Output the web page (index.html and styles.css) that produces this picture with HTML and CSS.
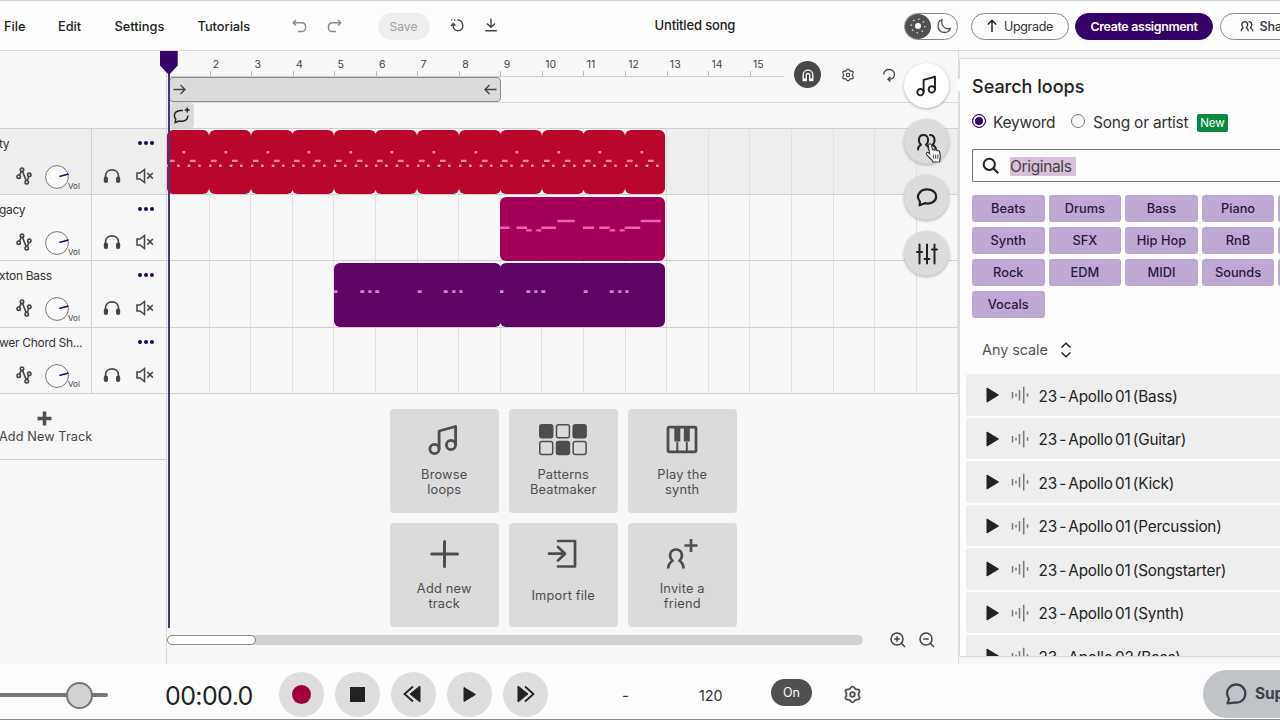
FILE: index.html
```html
<!DOCTYPE html>
<html lang="en">

<head>
  <meta charset="UTF-8">
  <meta name="viewport" content="width=device-width, initial-scale=1.0">
  <title>Untitled song</title>
  <link rel="stylesheet" href="styles.css">
</head>

<body>
  <!-- shared icons -->
  <svg class="defs" width="0" height="0">
    <symbol id="note" viewBox="0 0 32 32"><g fill="none" stroke="currentColor" stroke-width="2.8" stroke-linejoin="round"><circle cx="6.500" cy="25" r="4.6"/><circle cx="23" cy="21" r="4.6"/><path d="M11.1 25V7L27.6 2.500V21"/></g></symbol>
    <symbol id="people" viewBox="0 0 22 18"><g fill="none" stroke="currentColor" stroke-width="2" stroke-linecap="round" stroke-linejoin="round"><path d="M2 16.500C2 14.500 3 13 5 11.700C1.500 8.500 2.500 2 7.500 2S13.500 8.500 10 11.700C12 13 13 14.500 13 16.500M14 2C19 2 20 8.500 16.500 11.700C18.500 13 20 14.500 20 16.500"/></g></symbol>
    <symbol id="gear" viewBox="0 0 24 24"><g fill="none" stroke="currentColor" stroke-width="2.300" stroke-linejoin="round"><path d="M12 2C14 2 14.500 4.700 16 5.300C17.500 6 19.500 4.600 20.700 6.700C21.800 8.900 19.500 10 19.500 12S21.800 15.100 20.700 17.300C19.500 19.400 17.500 18 16 18.700C14.500 19.300 14 22 12 22S9.500 19.300 8 18.700C6.500 18 4.500 19.400 3.300 17.300C2.200 15.100 4.500 14 4.500 12S2.200 8.900 3.300 6.700C4.500 4.600 6.500 6 8 5.300C9.500 4.700 10 2 12 2Z"/><circle cx="12" cy="12" r="2.900"/></g></symbol>
    <symbol id="automation" viewBox="0 0 16 18"><g fill="none" stroke="currentColor" stroke-width="1.600"><circle cx="2.700" cy="9.700" r="1.700"/><circle cx="6" cy="2.700" r="1.700"/><circle cx="10.700" cy="15.200" r="1.700"/><circle cx="13.300" cy="7.800" r="1.700"/><path d="M3.400 8.100L5.300 4.300M6.500 4.400L10.100 13.500M11.300 13.600L12.700 9.500"/></g></symbol>
    <symbol id="headphones" viewBox="0 0 18 16"><path d="M2.500 11V8C2.500-.3 15.500-.3 15.500 8V11" fill="none" stroke="currentColor" stroke-width="1.700"/><rect x=".8" y="8.500" width="4.200" height="6.500" rx="2" fill="currentColor"/><rect x="13" y="8.500" width="4.200" height="6.500" rx="2" fill="currentColor"/></symbol>
    <symbol id="mute" viewBox="0 0 18 16"><g fill="none" stroke="currentColor" stroke-width="1.500"><path d="M1 5H4L8.500 1.500V14.500L4 11H1ZM11.300 5L16.800 10.600M16.800 5L11.300 10.600"/></g></symbol>
    <symbol id="knob" viewBox="0 0 24 24"><circle cx="12" cy="12" r="11.400" fill="#fbfbfb" stroke="#777"/><path d="M14.300 11.500L23.500 9" stroke="#35006b" stroke-width="1.600"/></symbol>
    <symbol id="wave" viewBox="0 0 18 18"><path d="M1.500 6V12.500M5 7.700V10.500M8.500 4V14.500M12.700 .8V17.500M16.500 7.200V10.800" stroke="#777" stroke-width="1.500"/></symbol>
    <symbol id="play" viewBox="0 0 14 16"><path d="M1 1L12.500 8L1 15Z" fill="currentColor" stroke="currentColor" stroke-linejoin="round"/></symbol>
    <symbol id="beat" viewBox="0 0 42 64"><path d="M0 34.500h2.500v2.500H0zM2 29.700h5.600v2.400H2zM10 34.500h2.700v2.500H10zM15.500 21h2.700v2.600h-2.700zM20.700 34.500h2.700v2.500h-2.700zM23 29.700h5.600v2.400H23zM31 34.500h2.700v2.500H31z" fill="#f48a9f"/></symbol>
    <symbol id="bassline" viewBox="0 0 166 64"><path d="M0 27.300h3.500v2.600H0zM26.300 27.300h4v2.600h-4zM34.300 27.300h3.200v2.600h-3.200zM41.300 27.300h4v2.600h-4zM83.700 27.300h4v2.600h-4zM109.700 27.300h4v2.600h-4zM118.300 27.300h3.200v2.600h-3.200zM125.300 27.300h3.200v2.600h-3.200z" fill="#cb86d6"/></symbol>
    <symbol id="comment" viewBox="0 0 24 22"><path d="M4.300 15.500C-1 9 4.500 2.200 12.300 2.200C18 2.200 22 5.500 22 9.800C22 15.500 16 18.700 9.700 17.200L4 19.500Z" fill="none" stroke="currentColor" stroke-width="2.400" stroke-linejoin="round"/></symbol>
  </svg>

  <div class="app">
    <header class="topbar">
      <nav class="menu">
        <a class="menu-file">File</a>
        <a class="menu-edit">Edit</a>
        <a class="menu-settings">Settings</a>
        <a class="menu-tutorials">Tutorials</a>
      </nav>
      <div class="history">
        <svg width="15" height="14" viewBox="0 0 15 14"><path d="M4 1L1.200 3.800L4 6.500M1.500 3.800H9.500C15 3.800 15 12.500 9.500 12.500H6" /></svg>
        <svg width="15" height="14" viewBox="0 0 15 14"><path d="M11 1L13.800 3.800L11 6.500M13.500 3.800H5.500C0 3.800 0 12.500 5.500 12.500H9" /></svg>
      </div>
      <button type="button" class="save">Save</button>
      <div class="file-icons">
        <svg width="14" height="14" viewBox="0 0 14 14"><path d="M7.500 2C14.500 2 14.500 12.800 8 12.800C4.500 12.800 2.700 10 3.200 6.500M1 8L3.200 5.500L5.500 7.500M1 2H2.300M4 2H5.300" /></svg>
        <svg width="14" height="14" viewBox="0 0 14 14"><path d="M7 .5V9M3 5.500L7 9.300L11 5.500M1.200 12.800H12.800" /></svg>
      </div>
      <h1 class="song-title">Untitled song</h1>
      <div class="theme">
        <span class="theme-sun"><svg width="18" height="18" viewBox="0 0 18 18"><circle cx="9" cy="9" r="3" fill="#fff"/><circle cx="9" cy="9" r="6.800" fill="none" stroke="#ddd" stroke-width="1.400" stroke-dasharray="1.400 3.940"/></svg></span>
        <span class="theme-moon"><svg width="16" height="16" viewBox="0 0 16 16"><path d="M6 1.500C0 4 .8 14.500 8.500 14.500C11.500 14.500 13.700 12.700 14.500 10.400C8.500 12 4.500 7 6 1.500Z" fill="none" stroke="#505050" stroke-width="1.300" stroke-linejoin="round"/></svg></span>
      </div>
      <button type="button" class="pill upgrade"><svg width="12" height="14" viewBox="0 0 12 14"><path d="M6 13V1.500M1.800 5.500L6 1.300L10.200 5.500" fill="none" stroke="#222" stroke-width="1.500"/></svg>Upgrade</button>
      <button type="button" class="pill create">Create assignment</button>
      <button type="button" class="pill share"><svg width="14" height="12"><use href="#people"/></svg>Share</button>
    </header>

    <main class="workspace">
      <section class="tracks">
        <div class="track selected">
          <div class="track-main">
            <p class="track-name">ty</p>
            <div class="controls"><svg width="16" height="18"><use href="#automation"/></svg><svg class="knob" width="24" height="24"><use href="#knob"/></svg><span class="vol">Vol</span></div>
          </div>
          <div class="track-side">
            <span class="dots"><i></i><i></i><i></i></span>
            <div class="side-icons"><svg width="18" height="16"><use href="#headphones"/></svg><svg width="18" height="16"><use href="#mute"/></svg></div>
          </div>
        </div>
        <div class="track">
          <div class="track-main">
            <p class="track-name">gacy</p>
            <div class="controls"><svg width="16" height="18"><use href="#automation"/></svg><svg class="knob" width="24" height="24"><use href="#knob"/></svg><span class="vol">Vol</span></div>
          </div>
          <div class="track-side">
            <span class="dots"><i></i><i></i><i></i></span>
            <div class="side-icons"><svg width="18" height="16"><use href="#headphones"/></svg><svg width="18" height="16"><use href="#mute"/></svg></div>
          </div>
        </div>
        <div class="track">
          <div class="track-main">
            <p class="track-name">xton Bass</p>
            <div class="controls"><svg width="16" height="18"><use href="#automation"/></svg><svg class="knob" width="24" height="24"><use href="#knob"/></svg><span class="vol">Vol</span></div>
          </div>
          <div class="track-side">
            <span class="dots"><i></i><i></i><i></i></span>
            <div class="side-icons"><svg width="18" height="16"><use href="#headphones"/></svg><svg width="18" height="16"><use href="#mute"/></svg></div>
          </div>
        </div>
        <div class="track">
          <div class="track-main">
            <p class="track-name">wer Chord Sh...</p>
            <div class="controls"><svg width="16" height="18"><use href="#automation"/></svg><svg class="knob" width="24" height="24"><use href="#knob"/></svg><span class="vol">Vol</span></div>
          </div>
          <div class="track-side">
            <span class="dots"><i></i><i></i><i></i></span>
            <div class="side-icons"><svg width="18" height="16"><use href="#headphones"/></svg><svg width="18" height="16"><use href="#mute"/></svg></div>
          </div>
        </div>
        <div class="add-track">
          <svg width="15" height="15" viewBox="0 0 15 15"><path d="M7.500 .5V14.500M.5 7.500H14.500" stroke="#505050" stroke-width="3.600"/></svg>
          <span>Add New Track</span>
        </div>
      </section>

      <section class="timeline">
        <div class="ruler-row">
          <div class="ruler">
            <span></span><span>2</span><span>3</span><span>4</span><span>5</span><span>6</span><span>7</span><span>8</span><span>9</span><span>10</span><span>11</span><span>12</span><span>13</span><span>14</span><span>15</span>
          </div>
          <div class="ruler-tools">
            <span class="magnet"><svg width="14" height="14" viewBox="0 0 14 14"><path d="M2.200 12.500V7C2.200 .6 11.800 .6 11.800 7V12.500H8.800V7.500C8.800 4.800 5.200 4.800 5.200 7.500V12.500Z" fill="none" stroke="#fff" stroke-width="1.300"/><path d="M2 10.500h3.400v2H2zM8.600 10.500H12v2H8.600z" fill="#fff"/></svg></span>
            <svg class="grid-gear" width="14" height="14"><use href="#gear"/></svg>
            <svg class="grid-loop" width="14" height="14" viewBox="0 0 14 14"><path d="M1.700 6.500C1.700-.5 12.500 .2 12.500 6.500C12.500 10 9.500 11.500 6.500 11.200M8.500 8.800L6 11.200L8.500 13.500" fill="none" stroke="#444" stroke-width="1.300"/></svg>
          </div>
        </div>
        <div class="loop-row">
          <div class="loop-range">
            <svg width="13" height="11" viewBox="0 0 13 11"><path d="M.5 5.500H12M7.500 1L12 5.500L7.500 10"/></svg>
            <svg width="13" height="11" viewBox="0 0 13 11"><path d="M12.500 5.500H1M5.500 1L1 5.500L5.500 10"/></svg>
          </div>
        </div>
        <div class="marker-row">
          <span class="marker-add"><svg width="18" height="17" viewBox="0 0 18 17"><path d="M10 3.500H8C3 3.500 .8 6.500 1.500 9.500C1.800 11 2.700 12 2.700 12L2.200 15.500L6 14C12 15 15 12.500 14.800 8.500M14.200 .5V5.500M11.700 3H16.700" fill="none" stroke="#222" stroke-width="1.500"/></svg></span>
        </div>

        <div class="lanes">
          <div class="lane selected">
            <svg class="clip red"><use href="#beat" width="42" height="64"/></svg><svg class="clip red"><use href="#beat" width="42" height="64"/></svg><svg class="clip red"><use href="#beat" width="42" height="64"/></svg><svg class="clip red"><use href="#beat" width="42" height="64"/></svg><svg class="clip red"><use href="#beat" width="42" height="64"/></svg><svg class="clip red"><use href="#beat" width="42" height="64"/></svg><svg class="clip red"><use href="#beat" width="42" height="64"/></svg><svg class="clip red"><use href="#beat" width="42" height="64"/></svg><svg class="clip red"><use href="#beat" width="42" height="64"/></svg><svg class="clip red"><use href="#beat" width="42" height="64"/></svg><svg class="clip red"><use href="#beat" width="42" height="64"/></svg><svg class="clip red"><use href="#beat" width="42" height="64"/></svg>
          </div>
          <div class="lane from-nine">
            <svg class="clip magenta"><path d="M0 29.500h9.500v2.400H0zM16.500 29.500H27v2.400H16.500zM26.300 32.200h5.500v2.400h-5.500zM36.300 32.200h5v2.400h-5zM41.300 29.500H56v2.400H41.300zM57.500 22.800h17.300v2.400H57.500zM83 29.500h11v2.400H83zM99.300 29.500h10.400v2.400H99.300zM109.700 32.200h5.500v2.400h-5.500zM119.700 32.200h5v2.400h-5zM124.700 29.500h15.500v2.400h-15.500zM140.700 22.800h20v2.400h-20z" fill="#ee62b4"/></svg>
          </div>
          <div class="lane from-five">
            <svg class="clip purple"><use href="#bassline" width="166" height="64"/></svg><svg class="clip purple"><use href="#bassline" width="166" height="64"/></svg>
          </div>
          <div class="lane"></div>
        </div>

        <div class="cards">
          <div class="card"><svg width="32" height="32"><use href="#note"/></svg><p>Browse<br>loops</p></div>
          <div class="card"><svg width="48" height="32" viewBox="0 0 48 32"><g fill="none" stroke="#4d4d4d" stroke-width="1.500"><rect x=".8" y=".8" width="12.900" height="12.900" rx="2" fill="#4d4d4d"/><rect x="17.500" y=".8" width="12.900" height="12.900" rx="2"/><rect x="34.200" y=".8" width="12.900" height="12.900" rx="2" fill="#4d4d4d"/><rect x=".8" y="17.500" width="12.900" height="12.900" rx="2"/><rect x="17.500" y="17.500" width="12.900" height="12.900" rx="2" fill="#4d4d4d"/><rect x="34.200" y="17.500" width="12.900" height="12.900" rx="2"/></g></svg><p>Patterns<br>Beatmaker</p></div>
          <div class="card"><svg width="32" height="32" viewBox="0 0 32 32"><rect x="2" y="3.200" width="28" height="24.600" fill="none" stroke="#4d4d4d" stroke-width="2.800" rx="1"/><path d="M11.300 18V27M20.800 18V27" stroke="#4d4d4d" stroke-width="2"/><path d="M8.300 3H14.300V17.500H8.300ZM17.800 3H23.800V17.500H17.800Z" fill="#4d4d4d"/></svg><p>Play the<br>synth</p></div>
          <div class="card"><svg width="32" height="32" viewBox="0 0 32 32"><path d="M16.500 3.500V28.500M3.700 16H29.500" stroke="#4d4d4d" stroke-width="3" stroke-linecap="round"/></svg><p>Add new<br>track</p></div>
          <div class="card"><svg width="32" height="32" viewBox="0 0 32 32"><path d="M11 3H28V28.500H11M2 15.700H17M11 9L18 15.700L11 22.500" fill="none" stroke="#4d4d4d" stroke-width="2.700" stroke-linecap="round" stroke-linejoin="round"/></svg><p class="single">Import file</p></div>
          <div class="card"><svg width="32" height="32" viewBox="0 0 32 32"><path d="M2.200 30.500C2.200 26.500 4 24.500 6.300 22.700C2 17.500 4.500 11.500 10 11.500S18 17.500 13.700 22.700C16 24.500 17.500 26.500 17.500 30.500" fill="none" stroke="#4d4d4d" stroke-width="2.700"/><path d="M25 1V14M18.500 7.500H31.500" stroke="#4d4d4d" stroke-width="2.700"/></svg><p>Invite a<br>friend</p></div>
        </div>

        <div class="scroll-row">
          <div class="scrollbar"><div class="thumb"></div></div>
          <svg width="16" height="16" viewBox="0 0 16 16"><path d="M11 11L15 15M7 4.200V9.800M4.200 7H9.800" /><circle cx="7" cy="7" r="6"/></svg>
          <svg width="16" height="16" viewBox="0 0 16 16"><path d="M11 11L15 15M4.200 7H9.800" /><circle cx="7" cy="7" r="6"/></svg>
        </div>

        <svg class="playhead" width="18" height="577" viewBox="0 0 18 577"><path d="M8 20H10V577H8Z" fill="#4d3478"/><path d="M0 0H17.700V14.500L9 24L0 14.500Z" fill="#350068"/></svg>
      </section>

      <aside class="panel">
        <h2>Search loops</h2>
        <div class="mode">
          <span class="radio checked"></span><span class="keyword">Keyword</span>
          <span class="radio"></span><span class="artist">Song or artist</span>
          <span class="badge">New</span>
        </div>
        <div class="search">
          <svg width="18" height="18" viewBox="0 0 18 18"><circle cx="7.300" cy="7.300" r="5.600"/><path d="M11.300 11.300L16.300 16.300"/></svg>
          <mark>Originals</mark>
        </div>
        <div class="tags">
          <span>Beats</span><span>Drums</span><span>Bass</span><span>Piano</span><span></span>
          <span>Synth</span><span>SFX</span><span>Hip Hop</span><span>RnB</span><span></span>
          <span>Rock</span><span>EDM</span><span>MIDI</span><span>Sounds</span><span></span>
          <span>Vocals</span>
        </div>
        <div class="scale">Any scale<svg width="12" height="16" viewBox="0 0 12 16"><path d="M1.500 5.500L6 1.200L10.500 5.500M1.500 10.500L6 14.800L10.500 10.500"/></svg></div>
        <ul class="loops">
          <li><svg width="14" height="16"><use href="#play"/></svg><svg width="18" height="18"><use href="#wave"/></svg><span>23 - Apollo 01 (Bass)</span></li>
          <li><svg width="14" height="16"><use href="#play"/></svg><svg width="18" height="18"><use href="#wave"/></svg><span>23 - Apollo 01 (Guitar)</span></li>
          <li><svg width="14" height="16"><use href="#play"/></svg><svg width="18" height="18"><use href="#wave"/></svg><span>23 - Apollo 01 (Kick)</span></li>
          <li><svg width="14" height="16"><use href="#play"/></svg><svg width="18" height="18"><use href="#wave"/></svg><span>23 - Apollo 01 (Percussion)</span></li>
          <li><svg width="14" height="16"><use href="#play"/></svg><svg width="18" height="18"><use href="#wave"/></svg><span>23 - Apollo 01 (Songstarter)</span></li>
          <li><svg width="14" height="16"><use href="#play"/></svg><svg width="18" height="18"><use href="#wave"/></svg><span>23 - Apollo 01 (Synth)</span></li>
          <li><svg width="14" height="16"><use href="#play"/></svg><svg width="18" height="18"><use href="#wave"/></svg><span>23 - Apollo 02 (Bass)</span></li>
        </ul>
      </aside>

      <!-- floating buttons over the timeline -->
      <div class="float-tools">
        <span class="tool active"><svg width="22" height="22"><use href="#note"/></svg></span>
        <span class="tool"><svg width="22" height="18"><use href="#people"/></svg></span>
        <span class="tool"><svg width="22" height="21"><use href="#comment"/></svg></span>
        <span class="tool"><svg width="22" height="22" viewBox="0 0 22 22"><path d="M3.500 1.500V20.500M11 1.500V20.500M18.500 1.500V20.500M1 9H6M8.500 16H13.500M16 6.500H21" stroke="currentColor" stroke-width="2" stroke-linecap="round"/></svg></span>
      </div>
      <svg class="cursor" width="18" height="20" viewBox="0 0 18 20"><path d="M4.300 1C5.500 .6 6.400 1.300 6.600 2.200L7.500 6.800C8.300 6.200 9.300 6.300 9.800 7.200C10.800 6.500 11.700 6.800 12.200 7.800C13.300 7.300 14.300 8 14.600 9C15.500 12 16 14 14.800 16.500L14.700 18.800L7.800 19L6.900 17C4.500 15 3 13.300 1.500 11.300C.6 10 2.300 8.700 3.600 9.800L4.700 10.700L3.300 2.900C3.100 2 3.500 1.300 4.300 1Z" fill="#fff" stroke="#333" stroke-width="1.100"/><path d="M8.300 11.500L8.800 15.500M10.700 11.500V15.500M13 11.500L12.600 15.500" stroke="#333"/></svg>
    </main>

    <footer class="transport">
      <div class="volume"><div class="volume-knob"></div></div>
      <span class="time">00:00.0</span>
      <div class="buttons">
        <span class="round"><i class="record"></i></span>
        <span class="round"><i class="stop"></i></span>
        <span class="round"><svg class="rewind" width="18" height="18" viewBox="0 0 18 18"><path d="M17 1V17L7 9Z" fill="#222" stroke="#222" stroke-linejoin="round"/><path d="M10 1.500L1.500 9L10 16.500" fill="none" stroke="#222" stroke-width="1.800"/></svg></span>
        <span class="round"><svg width="14" height="17"><use href="#play"/></svg></span>
        <span class="round"><svg width="18" height="18" viewBox="0 0 18 18"><path d="M1 1V17L11 9Z" fill="#222" stroke="#222" stroke-linejoin="round"/><path d="M8 1.500L16.500 9L8 16.500" fill="none" stroke="#222" stroke-width="1.800"/></svg></span>
      </div>
      <span class="key">-</span>
      <span class="tempo">120</span>
      <span class="on">On</span>
      <svg class="transport-gear" width="19" height="19"><use href="#gear"/></svg>
      <div class="support"><svg width="22" height="22" viewBox="0 0 22 22"><path d="M4 16C-1 8 5 1.500 11.500 1.500C16.500 1.500 20.300 5.500 20.300 10.500C20.300 16 16 20 10.800 19.500C8 19.500 6.500 20.300 2.500 20.300Z" fill="none" stroke="#3e4147" stroke-width="2.300" stroke-linejoin="round"/></svg>Support</div>
    </footer>
  </div>
</body>

</html>
```

FILE: styles.css
```css
* {
  box-sizing: border-box;
}

body {
  margin: 0;
  font-family: Inter, "Liberation Sans", sans-serif;
  color: #333;
  background-color: #fdfdfd;
  overflow: hidden;
}

h1,
h2,
p,
ul {
  margin: 0;
  padding: 0;
  font-weight: 400;
}

svg {
  display: block;
  flex-shrink: 0;
}

.defs {
  position: absolute;
}

.app {
  width: 1280px;
  height: 720px;
  display: grid;
  grid-template-rows: 51px 613px 56px;
  overflow: hidden;
}

/* top bar */
.topbar {
  display: flex;
  align-items: center;
  border-top: 1px solid #d3d3d3;
  border-bottom: 1px solid #d9d9d9;
  white-space: nowrap;
}

.menu {
  display: flex;
  padding: 2px 0 0 4px;
  font-size: 12.8px;
  font-weight: 500;
  color: #222;
  letter-spacing: -0.01px;
}

.menu-file {
  width: 54px;
}

.menu-edit {
  width: 56.5px;
}

.menu-settings {
  width: 83px;
}

.menu-tutorials {
  width: 94.5px;
}

.history,
.file-icons {
  display: flex;
  gap: 20px;
}

.history path {
  fill: none;
  stroke: #8a8a8a;
  stroke-width: 1.4;
}

.file-icons path {
  fill: none;
  stroke: #444;
  stroke-width: 1.4;
}

.save {
  width: 52px;
  height: 27px;
  margin: 1px 0 0 35.5px;
  padding: 1px 0 0;
  border: none;
  border-radius: 14px;
  background-color: #eee;
  color: #a0a0a0;
  font: 400 12px Inter, sans-serif;
}

.file-icons {
  margin: -2px 0 0 20px;
}

.song-title {
  width: 249px;
  margin: -1px 0 0 157px;
  font-size: 13px;
  font-weight: 500;
  letter-spacing: -0.15px;
  color: #222;
}

.theme {
  display: flex;
  width: 54px;
  height: 27px;
  margin-top: 1px;
  border: 1px solid #888;
  border-radius: 14px;
}

.theme-sun,
.theme-moon {
  display: grid;
  place-items: center;
  width: 26px;
}

.theme-sun {
  border-radius: 50%;
  background-color: #505050;
}

.pill {
  height: 27px;
  margin-top: 1px;
  padding: 0;
  display: flex;
  align-items: center;
  justify-content: center;
  gap: 6px;
  border: 1px solid #888;
  border-radius: 14px;
  background-color: #fdfdfd;
  color: #333;
  font: 500 12.5px Inter, sans-serif;
  flex-shrink: 0;
}

.upgrade {
  width: 98px;
  margin-left: 13px;
  font-weight: 400;
  letter-spacing: -0.3px;
}

.create {
  width: 138px;
  margin-left: 6.5px;
  border-color: #350068;
  background-color: #350068;
  color: #fff;
  font-weight: 600;
  font-size: 12.4px;
  letter-spacing: -0.33px;
}

.share {
  width: 98px;
  margin-left: 7px;
  justify-content: flex-start;
  padding-left: 18.5px;
}

/* workspace */
.workspace {
  position: relative;
  display: flex;
  background-color: #f7f7f7;
}

.tracks {
  width: 167px;
  padding-top: 77px;
  border-right: 1px solid #d6d6d6;
}

.track {
  display: flex;
  height: 66.2px;
  border-top: 1px solid #d0d0d0;
}

.track.selected,
.lane.selected {
  background-color: #eee;
}

.track-main {
  width: 92px;
  border-right: 1px solid #d0d0d0;
}

.track-name {
  height: 30px;
  line-height: 29px;
  margin-left: -1px;
  font-size: 12px;
  letter-spacing: -0.3px;
  white-space: nowrap;
}

.controls {
  display: flex;
  align-items: center;
  height: 34px;
  padding-left: 16px;
  color: #444;
}

.knob {
  margin: 2px 0 0 12.5px;
}

.vol {
  margin: 19px 0 0 -0.5px;
  font-size: 8px;
}

.track-side {
  flex: 1;
}

.dots {
  display: flex;
  justify-content: flex-end;
  align-items: center;
  gap: 2px;
  height: 28px;
  padding-right: 12px;
}

.dots i {
  width: 4px;
  height: 4px;
  border-radius: 50%;
  background-color: #250058;
}

.side-icons {
  display: flex;
  align-items: center;
  gap: 15px;
  height: 38px;
  padding-left: 11px;
  color: #444;
}

.add-track {
  height: 67px;
  padding-top: 17px;
  border-top: 1px solid #d0d0d0;
  border-bottom: 1px solid #d0d0d0;
  color: #444;
  font-size: 12.7px;
  letter-spacing: 0.1px;
}

.add-track span {
  margin-left: -1px;
}

.add-track svg {
  margin: 0 0 3px 37px;
}

/* timeline */
.timeline {
  position: relative;
  width: 792px;
  border-right: 1px solid #dadada;
}

.ruler-row {
  display: flex;
  height: 26px;
}

.ruler {
  display: flex;
  width: 617px;
  padding-left: 1px;
  padding-top: 6px;
  border-bottom: 1px solid #ccc;
}

.ruler span {
  flex: 0 0 41.55px;
  font-size: 10.5px;
  line-height: 16px;
  padding-left: 3.3px;
  color: #444;
  background: linear-gradient(#bbb, #bbb) left bottom / 1px 5px no-repeat;
}

.ruler span:first-child {
  background: none;
}

.ruler-tools {
  display: flex;
  align-items: center;
  height: 47px;
  padding-left: 10px;
  color: #505050;
}

.magnet {
  width: 27px;
  height: 27px;
  display: grid;
  place-items: center;
  border-radius: 50%;
  background-color: #484848;
}

.grid-gear {
  margin-left: 20px;
}

.grid-loop {
  margin-left: 27px;
}

.loop-row {
  height: 26px;
  padding-left: 2px;
  border-bottom: 1px solid #dadada;
}

.loop-range {
  width: 332px;
  height: 25px;
  padding: 0 3px;
  display: flex;
  align-items: center;
  justify-content: space-between;
  border: 1px solid #8a8a8a;
  border-radius: 4px;
  background-color: #dbdbdb;
}

.loop-range path {
  fill: none;
  stroke: #444;
  stroke-width: 1.4;
}

.marker-row {
  height: 25px;
  padding-left: 3px;
}

.marker-add {
  width: 24px;
  height: 25px;
  display: grid;
  place-items: center;
  border-radius: 3px;
  background-color: #dadada;
}

.lane {
  display: flex;
  height: 66.2px;
  padding: 1.4px 0 0 0.4px;
  border-top: 1px solid #d0d0d0;
  background-image: repeating-linear-gradient(to right, transparent 0, transparent 40.6px, #e2e2e2 40.6px, #e2e2e2 41.6px);
  background-position: 1px 0;
}

.lanes {
  border-bottom: 1px solid #d0d0d0;
}

.clip {
  flex: 0 0 42px;
  height: 64px;
  margin-right: -0.4px;
  border-radius: 6px;
}

.red {
  background-color: #b8062c;
}

.lane.selected .clip:last-child {
  flex-basis: 40px;
}

/* keeps the gaps at the rounded corners light */
.lane.selected {
  background-image:
    linear-gradient(#fff1f3, #fff1f3),
    repeating-linear-gradient(to right, transparent 0, transparent 40.6px, #e2e2e2 40.6px, #e2e2e2 41.6px);
  background-size: 498px 100%, auto;
  background-repeat: no-repeat, repeat;
  background-position: 0 0, 1px 0;
}

.from-nine {
  padding-left: 333.2px;
}

.magenta {
  flex-basis: 164.5px;
  background-color: #a50058;
}

.from-five {
  padding-left: 167px;
}

.purple {
  flex-basis: 166.6px;
  background-color: #600566;
}

.purple:last-child {
  flex-basis: 164.5px;
}

.cards {
  display: grid;
  grid-template-columns: repeat(3, 108.5px);
  grid-auto-rows: 103.5px;
  gap: 10.5px;
  padding: 15.7px 0 0 223px;
}

.card {
  display: flex;
  flex-direction: column;
  align-items: center;
  padding-top: 15px;
  border-radius: 4px;
  background-color: #dbdbdb;
  color: #4d4d4d;
  font-size: 12.8px;
  line-height: 15.500px;
  letter-spacing: 0.2px;
  text-align: center;
}

.card p {
  margin-top: 10.5px;
}

.card .single {
  margin-top: 18px;
}

.scroll-row {
  display: flex;
  align-items: center;
  height: 27px;
}

.scroll-row svg {
  margin: -1px 0 0 13px;
  fill: none;
  stroke: #444;
  stroke-width: 1.5;
}

.scrollbar {
  width: 696px;
  height: 10px;
  margin-right: 14px;
  border-radius: 5px;
  background-color: #d1d1d1;
}

.thumb {
  width: 89px;
  height: 10px;
  border: 1px solid #888;
  border-radius: 5px;
  background-color: #fff;
}

.playhead {
  position: absolute;
  left: -7px;
  top: 0;
}

/* loops panel */
.panel {
  width: 320px;
  height: 597px;
  margin: 8px 0 0 1px;
  padding: 17px 0 0 12px;
  background-color: #fdfdfd;
  box-shadow: 0 0 2px rgba(0, 0, 0, 0.35);
  overflow: hidden;
  white-space: nowrap;
}

.panel h2 {
  height: 35px;
  line-height: 22px;
  font-size: 18px;
  font-weight: 500;
  color: #222;
}

.mode {
  display: flex;
  align-items: center;
  height: 22px;
  font-size: 15.500px;
}

.radio {
  width: 14px;
  height: 14px;
  border: 1px solid #777;
  border-radius: 50%;
  margin-top: -2px;
}

.radio.checked {
  border-color: #350068;
  background-color: #2a0060;
  box-shadow: inset 0 0 0 2px #fff;
}

.keyword {
  width: 78px;
  margin-left: 7px;
  letter-spacing: -0.25px;
}

.artist {
  width: 97px;
  margin-left: 8px;
  letter-spacing: -0.23px;
}

.badge {
  width: 31px;
  height: 18px;
  margin: 2px 0 0 7px;
  border-radius: 2px;
  background-color: #078a3e;
  color: #fff;
  font-size: 11.500px;
  line-height: 18px;
  text-align: center;
}

.search {
  display: flex;
  align-items: center;
  height: 33px;
  margin-top: 16px;
  padding-left: 9px;
  border: 1px solid #777;
  border-right: none;
  border-radius: 2px 0 0 2px;
}

.search svg {
  fill: none;
  stroke: #222;
  stroke-width: 2;
}

.search mark {
  width: 66px;
  margin: 1px 0 0 10px;
  background-color: #d8bfd9;
  color: #444;
  font-size: 15.500px;
  line-height: 19px;
  letter-spacing: -0.35px;
}

.tags {
  display: grid;
  grid-template-columns: repeat(5, 72.5px);
  grid-auto-rows: 27.5px;
  gap: 4.5px 4.1px;
  margin-top: 12.7px;
}

.tags span {
  border-radius: 3px;
  background-color: #bda9d1;
  color: #2c1547;
  font-size: 12.8px;
  font-weight: 500;
  line-height: 27px;
  text-align: center;
}

.scale {
  display: flex;
  align-items: center;
  gap: 12px;
  margin: 21.8px 0 0 10px;
  height: 20px;
  font-size: 14.500px;
  letter-spacing: -0.1px;
  color: #555;
}

.scale path {
  fill: none;
  stroke: #222;
  stroke-width: 1.5;
}

.loops {
  margin: 14.5px 0 0 -6px;
  list-style: none;
}

.loops li {
  display: flex;
  align-items: center;
  height: 41.5px;
  margin-bottom: 2px;
  padding-left: 20px;
  border-radius: 3px 0 0 3px;
  background-color: #eee;
  color: #222;
  font-size: 15.300px;
  letter-spacing: -0.2px;
  word-spacing: -1.8px;
}

.loops span {
  margin-top: 2px;
}

.loops svg + svg {
  margin: 0 9.5px 0 11px;
}

.float-tools {
  position: absolute;
  left: 904px;
  top: 12px;
  display: flex;
  flex-direction: column;
  gap: 11px;
}

.tool {
  width: 45px;
  height: 45px;
  display: grid;
  place-items: center;
  border-radius: 50%;
  background-color: #dcdcdc;
  color: #222;
  box-shadow: 0 1px 3px rgba(0, 0, 0, 0.3);
}

.tool.active {
  background-color: #fff;
}

/* pointer from the panel to the active tool */
.tool.active::after {
  content: "";
  position: absolute;
  left: 49px;
  top: 14px;
  border: 8px solid transparent;
  border-left: none;
  border-right-color: #fdfdfd;
}

.cursor {
  position: absolute;
  left: 925px;
  top: 92px;
}

/* transport */
.transport {
  display: flex;
  align-items: center;
  height: 56px;
  border-bottom: 1px solid #8a8a8a;
}

.volume {
  display: flex;
  align-items: center;
  width: 108px;
  height: 4px;
  margin-top: 7px;
  border-radius: 0 2px 2px 0;
  background-color: #777;
}

.volume-knob {
  width: 27px;
  height: 27px;
  margin-left: 66px;
  border: 2px solid #777;
  border-radius: 50%;
  background-color: #d2d2d2;
}

.time {
  width: 114px;
  margin: 8px 0 0 57px;
  font-size: 25px;
  letter-spacing: -0.6px;
  color: #222;
}

.buttons {
  display: flex;
  gap: 11px;
  margin-top: 5px;
}

.round {
  width: 45px;
  height: 45px;
  display: grid;
  place-items: center;
  border-radius: 50%;
  background-color: #dedede;
  color: #222;
}

.rewind {
  margin-right: 4px;
}

.record {
  width: 19px;
  height: 19px;
  border-radius: 50%;
  background-color: #a0003c;
}

.stop {
  width: 15px;
  height: 15px;
  background-color: #222;
}

.key {
  width: 77px;
  margin: 8px 0 0 74px;
  font-size: 15px;
}

.tempo {
  width: 72px;
  margin-top: 7px;
  font-size: 14.3px;
}

.on {
  width: 41px;
  height: 27px;
  margin-top: 2px;
  border-radius: 14px;
  background-color: #505050;
  color: #fff;
  font-size: 12.500px;
  line-height: 27px;
  text-align: center;
}

.transport-gear {
  margin: 5px 0 0 31px;
  color: #505050;
}

.support {
  display: flex;
  align-items: center;
  gap: 8px;
  width: 110px;
  height: 48px;
  margin: 4px 0 0 341px;
  padding-left: 22px;
  border-radius: 24px;
  background-color: #c0c3c8;
  color: #3e4147;
  font-size: 15.500px;
  font-weight: 700;
  letter-spacing: -0.2px;
  flex-shrink: 0;
}
```
